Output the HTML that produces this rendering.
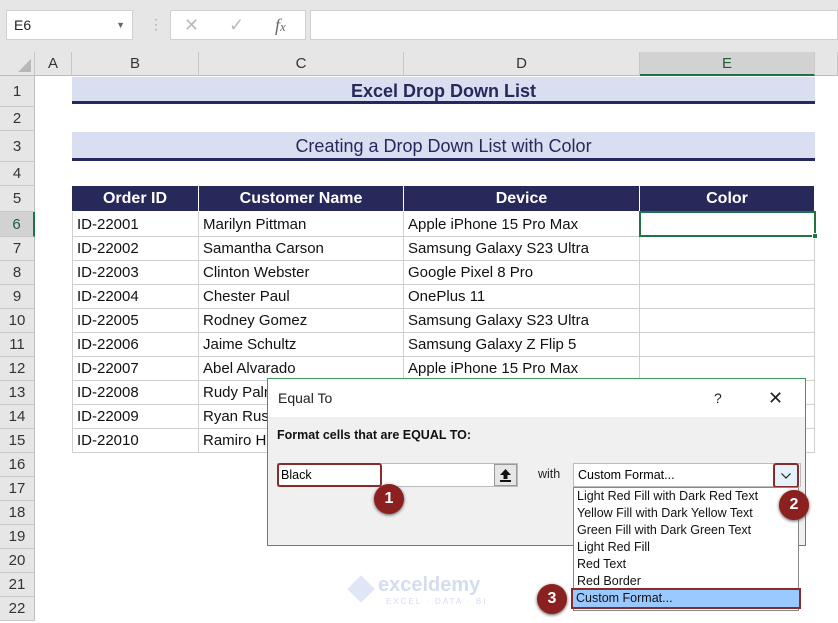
<!DOCTYPE html>
<html><head><meta charset="utf-8"><style>
*{margin:0;padding:0;box-sizing:border-box}
body{width:838px;height:623px;overflow:hidden;background:#fff;font-family:"Liberation Sans",sans-serif;position:relative}
.a{position:absolute}
.rh{position:absolute;left:0;width:35px;background:#e6e6e6;border-bottom:1px solid #c8c8c8;border-right:1px solid #bdbdbd;text-align:center;font-size:15px;color:#333;display:flex;align-items:center;justify-content:center}
.ch{position:absolute;top:52px;height:24px;background:#e6e6e6;border-right:1px solid #c8c8c8;border-bottom:1px solid #bdbdbd;text-align:center;font-size:15px;color:#333;line-height:24px}
.c{position:absolute;font-size:15px;color:#111;padding-left:4px;border-right:1px solid #d0d0d0;border-bottom:1px solid #d0d0d0;white-space:nowrap;overflow:hidden;display:flex;align-items:center}
.h{background:#26295a;color:#fff;font-weight:bold;justify-content:center;padding:0;font-size:16px;border-color:#fff}
.dl div{font-size:12.5px;height:17px;line-height:17px;padding-left:3px;color:#111}
</style></head><body>
<div class="a" style="left:0;top:0;width:838px;height:52px;background:#e6e6e6"></div>
<div class="a" style="left:6px;top:10px;width:127px;height:30px;background:#fff;border:1px solid #d0d0d0;font-size:14px;line-height:28px;padding-left:7px;color:#222">E6<span style="position:absolute;right:7px;top:0;font-size:9px;color:#666">▼</span></div>
<div class="a" style="left:149px;top:16px;color:#aaa;font-size:14px">⋮</div>
<div class="a" style="left:170px;top:10px;width:136px;height:30px;background:#fff;border:1px solid #d0d0d0;color:#bbb;font-size:18px;line-height:28px"><span style="position:absolute;left:13px">✕</span><span style="position:absolute;left:58px">✓</span><span style="position:absolute;left:104px;color:#666;font-style:italic;font-family:'Liberation Serif',serif">f<span style="font-size:13px">x</span></span></div>
<div class="a" style="left:310px;top:10px;width:528px;height:30px;background:#fff;border:1px solid #d0d0d0"></div>
<div class="ch" style="left:0;width:35px"><svg width="35" height="24"><polygon points="31,20 31,7 18,20" fill="#b8b8b8"/></svg></div>
<div class="ch" style="left:35px;width:37px">A</div>
<div class="ch" style="left:72px;width:127px">B</div>
<div class="ch" style="left:199px;width:205px">C</div>
<div class="ch" style="left:404px;width:236px">D</div>
<div class="ch" style="left:640px;width:175px;background:#d2d2d2;border-bottom:2px solid #217346;color:#1e5c37">E</div>
<div class="ch" style="left:815px;width:23px"></div>
<div class="rh" style="top:76px;height:31px">1</div>
<div class="rh" style="top:107px;height:24px">2</div>
<div class="rh" style="top:131px;height:31px">3</div>
<div class="rh" style="top:162px;height:24px">4</div>
<div class="rh" style="top:186px;height:26px">5</div>
<div class="rh" style="top:212px;height:25px;background:#d2d2d2;color:#1e5c37;border-right:2px solid #217346">6</div>
<div class="rh" style="top:237px;height:24px">7</div>
<div class="rh" style="top:261px;height:24px">8</div>
<div class="rh" style="top:285px;height:24px">9</div>
<div class="rh" style="top:309px;height:24px">10</div>
<div class="rh" style="top:333px;height:24px">11</div>
<div class="rh" style="top:357px;height:24px">12</div>
<div class="rh" style="top:381px;height:24px">13</div>
<div class="rh" style="top:405px;height:24px">14</div>
<div class="rh" style="top:429px;height:24px">15</div>
<div class="rh" style="top:453px;height:24px">16</div>
<div class="rh" style="top:477px;height:24px">17</div>
<div class="rh" style="top:501px;height:24px">18</div>
<div class="rh" style="top:525px;height:24px">19</div>
<div class="rh" style="top:549px;height:24px">20</div>
<div class="rh" style="top:573px;height:24px">21</div>
<div class="rh" style="top:597px;height:24px">22</div>
<div class="a" style="left:72px;top:77px;width:743px;height:27px;background:#d9dff0;border-bottom:3px solid #26295a;text-align:center;font-weight:bold;font-size:18px;color:#26295a;line-height:28px">Excel Drop Down List</div>
<div class="a" style="left:72px;top:132px;width:743px;height:29px;background:#d9dff0;border-bottom:3px solid #26295a;text-align:center;font-size:18px;color:#26295a;line-height:29px">Creating a Drop Down List with Color</div>
<div class="c h" style="left:72px;top:186px;width:127px;height:26px">Order ID</div>
<div class="c h" style="left:199px;top:186px;width:205px;height:26px">Customer Name</div>
<div class="c h" style="left:404px;top:186px;width:236px;height:26px">Device</div>
<div class="c h" style="left:640px;top:186px;width:175px;height:26px">Color</div>
<div id="rows"></div>
<script>
var d=[["ID-22001","Marilyn Pittman","Apple iPhone 15 Pro Max"],["ID-22002","Samantha Carson","Samsung Galaxy S23 Ultra"],["ID-22003","Clinton Webster","Google Pixel 8 Pro"],["ID-22004","Chester Paul","OnePlus 11"],["ID-22005","Rodney Gomez","Samsung Galaxy S23 Ultra"],["ID-22006","Jaime Schultz","Samsung Galaxy Z Flip 5"],["ID-22007","Abel Alvarado","Apple iPhone 15 Pro Max"],["ID-22008","Rudy Palmer",""],["ID-22009","Ryan Russell",""],["ID-22010","Ramiro Hill",""]];
var h="";d.forEach(function(r,i){var t=212+i*24+(i>0?1:0),hh=i==0?25:24;
h+='<div class="c" style="left:72px;top:'+t+'px;width:127px;height:'+hh+'px;border-left:1px solid #d0d0d0">'+r[0]+'</div><div class="c" style="left:199px;top:'+t+'px;width:205px;height:'+hh+'px">'+r[1]+'</div><div class="c" style="left:404px;top:'+t+'px;width:236px;height:'+hh+'px">'+r[2]+'</div><div class="c" style="left:640px;top:'+t+'px;width:175px;height:'+hh+'px"></div>';});
document.getElementById("rows").innerHTML=h;
</script>
<div class="a" style="left:639px;top:211px;width:177px;height:26px;border:2px solid #217346"></div>
<div class="a" style="left:812px;top:233px;width:6px;height:6px;background:#217346;border:1px solid #fff"></div>
<!-- dialog -->
<div class="a" style="left:267px;top:378px;width:539px;height:168px;background:#f0f0f0;border:1px solid #3a9a5a">
<div style="height:38px;background:#fff;font-size:14px;line-height:38px;padding-left:10px;color:#222">Equal To<span style="position:absolute;left:446px;top:0">?</span><span style="position:absolute;left:500px;top:0;font-size:18px">✕</span></div>
<div class="a" style="left:9px;top:49px;font-size:12.5px;font-weight:bold;color:#111">Format cells that are EQUAL TO:</div>
<div class="a" style="left:9px;top:84px;width:241px;height:24px;background:#fff;border:1px solid #bbb"></div>
<div class="a" style="left:9px;top:84px;width:105px;height:24px;border:2px solid #8b2a2a;border-radius:3px;font-size:12.5px;line-height:20px;padding-left:2px">Black</div>
<div class="a" style="left:226px;top:85px;width:23px;height:22px;background:#e6e6e6;border:1px solid #999"><svg width="21" height="20"><path d="M10.5 4 L5 10 H8.5 V14 H12.5 V10 H16 Z" fill="#111"/><rect x="5" y="15" width="11" height="2" fill="#111"/></svg></div>
<div class="a" style="left:270px;top:88px;font-size:12.5px;color:#222">with</div>
<div class="a" style="left:305px;top:84px;width:228px;height:24px;background:#fff;border:1px solid #bbb;font-size:12.5px;line-height:22px;padding-left:4px">Custom Format...</div>
<div class="a" style="left:505px;top:84px;width:26px;height:25px;background:#e5f1fb;border:2px solid #8b2a2a;border-radius:3px"><svg width="22" height="21"><path d="M6.5 8.5 L11 13 L15.5 8.5" stroke="#222" stroke-width="1.2" fill="none"/></svg></div>
</div>
<div class="a dl" style="left:573px;top:487px;width:226px;height:124px;background:#fff;border:1px solid #888">
<div>Light Red Fill with Dark Red Text</div><div>Yellow Fill with Dark Yellow Text</div><div>Green Fill with Dark Green Text</div><div>Light Red Fill</div><div>Red Text</div><div>Red Border</div>
<div style="background:#99c9ff;outline:2px solid #8b2a2a;margin:0 -1px">Custom Format...</div></div>
<div class="a" style="left:374px;top:484px;width:30px;height:30px;border-radius:50%;background:#8b2020;color:#fff;font-weight:bold;font-size:16px;text-align:center;line-height:30px;box-shadow:0 1px 3px #555">1</div>
<div class="a" style="left:779px;top:490px;width:30px;height:30px;border-radius:50%;background:#8b2020;color:#fff;font-weight:bold;font-size:16px;text-align:center;line-height:30px;box-shadow:0 1px 3px #555">2</div>
<div class="a" style="left:537px;top:584px;width:30px;height:30px;border-radius:50%;background:#8b2020;color:#fff;font-weight:bold;font-size:16px;text-align:center;line-height:30px;box-shadow:0 1px 3px #555">3</div>
<div class="a" style="left:348px;top:576px;width:26px;height:26px;background:#dfe6f5;transform:rotate(45deg) scale(.75)"></div>
<div class="a" style="left:378px;top:574px;font-size:20px;font-weight:bold;color:#d3dcf0">exceldemy</div>
<div class="a" style="left:386px;top:597px;font-size:8px;color:#d3dcf0;letter-spacing:2px">EXCEL · DATA · BI</div>
</body></html>
